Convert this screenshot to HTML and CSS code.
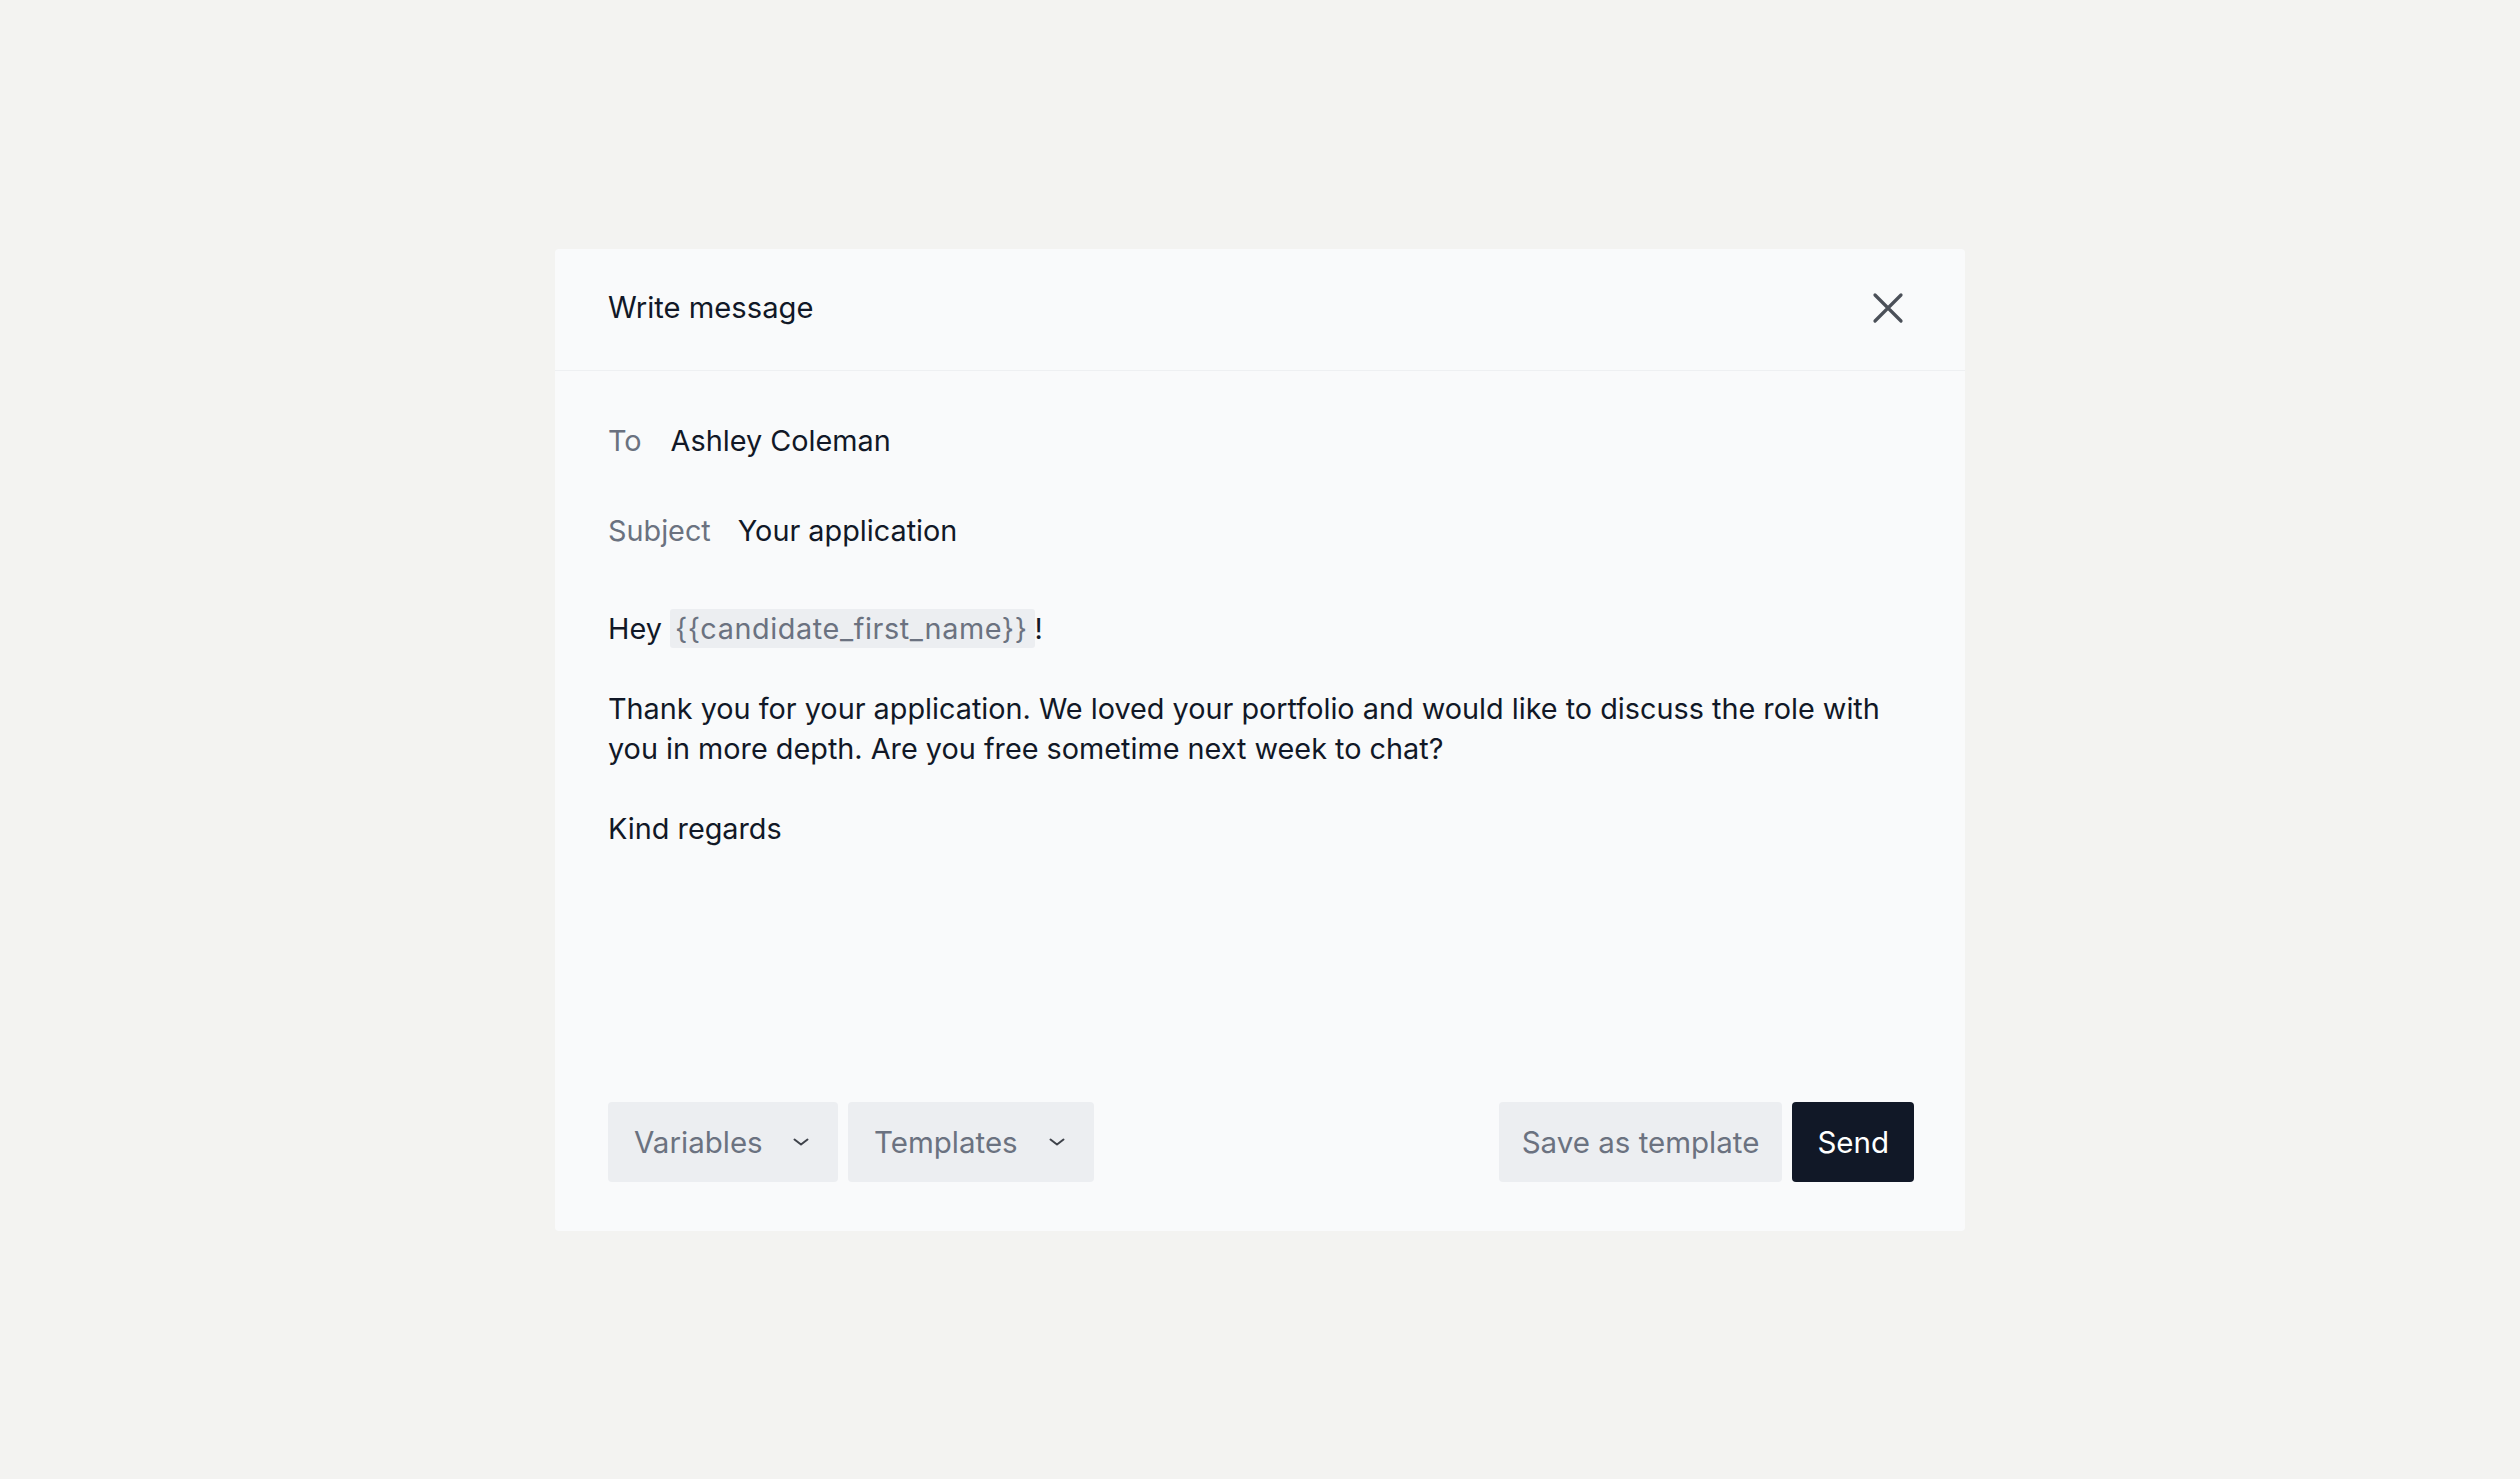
FILE: index.html
```html
<!DOCTYPE html>
<html lang="en">
<head>
<meta charset="utf-8">
<title>Write message</title>
<link rel="stylesheet" href="styles.css">
</head>
<body>
<main class="stage">
  <section class="dialog">
    <header class="dialog-header">
      <h1 class="dialog-title">Write message</h1>
      <button class="close-btn" aria-label="Close">
        <svg viewBox="0 0 24 24" width="52" height="52" fill="none" stroke="currentColor" stroke-width="1.5" stroke-linecap="round"><path d="M6 6L18 18M18 6L6 18"/></svg>
      </button>
    </header>
    <div class="dialog-body">
      <div class="field field-to"><span class="label">To</span><span class="value">Ashley Coleman</span></div>
      <div class="field field-subject"><span class="label">Subject</span><span class="value">Your application</span></div>
      <div class="message">
        <p>Hey <span class="var">{{candidate_first_name}}</span>!</p>
        <p>Thank you for your application. We loved your portfolio and would like to discuss the role with you in more depth. Are you free sometime next week to chat?</p>
        <p>Kind regards</p>
      </div>
      <div class="actions">
        <div class="actions-left">
          <button class="btn btn-gray btn-select btn-variables">Variables
            <svg viewBox="0 0 16 8" width="16" height="8" fill="none" stroke="currentColor" stroke-width="2" stroke-linecap="round" stroke-linejoin="round"><path d="M1.5 1.5L8 6.5L14.5 1.5"/></svg>
          </button>
          <button class="btn btn-gray btn-select btn-templates">Templates
            <svg viewBox="0 0 16 8" width="16" height="8" fill="none" stroke="currentColor" stroke-width="2" stroke-linecap="round" stroke-linejoin="round"><path d="M1.5 1.5L8 6.5L14.5 1.5"/></svg>
          </button>
        </div>
        <div class="actions-right">
          <button class="btn btn-gray btn-save">Save as template</button>
          <button class="btn btn-dark">Send</button>
        </div>
      </div>
    </div>
  </section>
</main>
</body>
</html>
```
FILE: styles.css
```css
* { box-sizing: border-box; }
html, body { margin: 0; padding: 0; }
body {
  background: #f3f3f1;
  font-family: Inter, "Liberation Sans", sans-serif;
  color: #111827;
  font-size: 28.8px;
  line-height: 40px;
}
.stage {
  min-height: 1479px;
  display: flex;
  align-items: center;
  justify-content: center;
}
.dialog {
  width: 1410px;
  background: #f9fafb;
  border-radius: 4px;
}
.dialog-header {
  display: flex;
  align-items: center;
  justify-content: space-between;
  padding: 33px 51px 36px 53px;
  border-bottom: 1px solid #eef0f2;
}
.dialog-title {
  margin: 0;
  font-size: 29.2px;
  font-weight: 400;
  line-height: 40px;
}
.close-btn {
  display: flex;
  padding: 0;
  border: 0;
  background: none;
  color: #4b5058;
  cursor: pointer;
}
.dialog-body {
  padding: 50px 51px 49px 53px;
}
.field {
  display: flex;
  gap: 29px;
}
.field-subject { margin-top: 50px; gap: 27px; }
.label { color: #6b7280; }
.message {
  margin-top: 58px;
  min-height: 493px;
}
.message p { margin: 0 0 40px; }
.message p:last-child { margin-bottom: 0; }
.var {
  background: #eceef1;
  color: #6b7280;
  padding: 2px 7px 2px 5px;
  border-radius: 3px;
  letter-spacing: 0.6px;
}
.actions {
  display: flex;
  justify-content: space-between;
  align-items: center;
}
.actions-left, .actions-right { display: flex; gap: 10px; }
.btn {
  height: 80px;
  border: 0;
  border-radius: 4px;
  font-family: inherit;
  font-size: 29.5px;
  padding: 0 25px;
  cursor: pointer;
}
.btn-gray { background: #eceef1; color: #6b7280; }
.btn-dark { background: #111827; color: #ffffff; }
.btn-save { padding: 0 23px; }
.btn-select {
  display: flex;
  align-items: center;
  justify-content: space-between;
  padding: 0 29px 0 26px;
}
.btn-select svg { color: #3f434b; }
.btn-variables { width: 230px; }
.btn-templates { width: 246px; }
```
